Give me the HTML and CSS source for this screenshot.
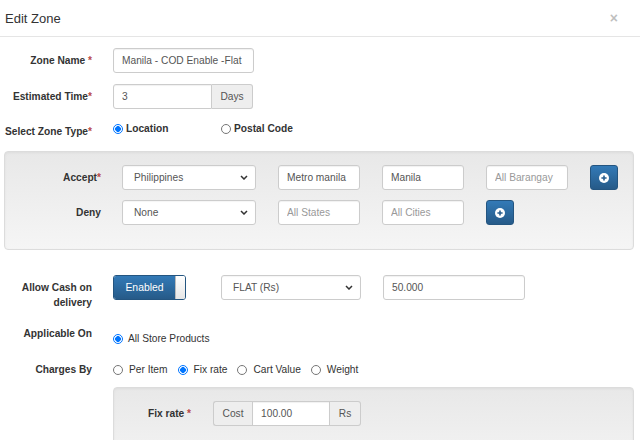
FILE: index.html
```html
<!DOCTYPE html>
<html>
<head>
<meta charset="utf-8">
<link rel="stylesheet" href="styles.css">
</head>
<body>
<div class="modal">
  <div class="head">
    <h4 class="title">Edit Zone</h4>
    <span class="close">×</span>
  </div>
  <div class="body">
    <div class="row r1">
      <label class="lbl">Zone Name <span class="req">*</span></label>
      <input class="ctl w-name" type="text" value="Manila - COD Enable -Flat">
    </div>
    <div class="row r2">
      <label class="lbl">Estimated Time<span class="req">*</span></label>
      <div class="group w-est">
        <input class="ctl grow" type="text" value="3">
        <span class="addon addon-r">Days</span>
      </div>
    </div>
    <div class="row r3">
      <label class="lbl lbl-top">Select Zone Type<span class="req">*</span></label>
      <div class="radios bold">
        <label class="opt opt-wide"><input type="radio" name="zt" checked><span>Location</span></label>
        <label class="opt"><input type="radio" name="zt"><span>Postal Code</span></label>
      </div>
    </div>

    <div class="well well1">
      <div class="wrow">
        <label class="lbl">Accept<span class="req">*</span></label>
        <div class="sel w-sel"><span>Philippines</span><svg width="8" height="5" viewBox="0 0 8 5"><polyline points="1,1 4,4 7,1" fill="none" stroke="#333" stroke-width="1.5"/></svg></div>
        <input class="ctl w-in" type="text" value="Metro manila">
        <input class="ctl w-in" type="text" value="Manila">
        <input class="ctl w-in" type="text" placeholder="All Barangay">
        <button class="btn-plus"><svg width="10" height="10" viewBox="0 0 10 10"><circle cx="5" cy="5" r="5" fill="#fff"/><path d="M5 2.4v5.2M2.4 5h5.2" stroke="#285e8e" stroke-width="1.6"/></svg></button>
      </div>
      <div class="wrow">
        <label class="lbl">Deny</label>
        <div class="sel w-sel"><span>None</span><svg width="8" height="5" viewBox="0 0 8 5"><polyline points="1,1 4,4 7,1" fill="none" stroke="#333" stroke-width="1.5"/></svg></div>
        <input class="ctl w-in" type="text" placeholder="All States">
        <input class="ctl w-in" type="text" placeholder="All Cities">
        <button class="btn-plus"><svg width="10" height="10" viewBox="0 0 10 10"><circle cx="5" cy="5" r="5" fill="#fff"/><path d="M5 2.4v5.2M2.4 5h5.2" stroke="#285e8e" stroke-width="1.6"/></svg></button>
      </div>
    </div>

    <div class="row r4">
      <label class="lbl lbl-pad">Allow Cash on<br>delivery</label>
      <div class="toggle"><span class="tog-on">Enabled</span><span class="tog-handle"></span></div>
      <div class="sel w-sel2"><span>FLAT (Rs)</span><svg width="8" height="5" viewBox="0 0 8 5"><polyline points="1,1 4,4 7,1" fill="none" stroke="#333" stroke-width="1.5"/></svg></div>
      <input class="ctl w-amt" type="text" value="50.000">
    </div>

    <div class="row r5">
      <label class="lbl">Applicable On</label>
      <div class="radios r5-opts">
        <label class="opt"><input type="radio" name="ap" checked><span>All Store Products</span></label>
      </div>
    </div>

    <div class="row r6">
      <label class="lbl">Charges By</label>
      <div class="radios">
        <label class="opt"><input type="radio" name="cb"><span>Per Item</span></label>
        <label class="opt"><input type="radio" name="cb" checked><span>Fix rate</span></label>
        <label class="opt"><input type="radio" name="cb"><span>Cart Value</span></label>
        <label class="opt"><input type="radio" name="cb"><span>Weight</span></label>
      </div>
    </div>

    <div class="well well2">
      <div class="wrow">
        <label class="lbl2">Fix rate <span class="req">*</span></label>
        <div class="group">
          <span class="addon addon-l">Cost</span>
          <input class="ctl w-cost" type="text" value="100.00">
          <span class="addon addon-r addon-rs">Rs</span>
        </div>
      </div>
    </div>
  </div>
</div>
</body>
</html>
```

FILE: styles.css
```css
* { box-sizing: border-box; }
html, body {
  margin: 0;
  padding: 0;
  background: #fff;
}
body {
  font-family: "Liberation Sans", Arial, sans-serif;
  font-size: 10.2px;
  color: #333;
  overflow: hidden;
}
.modal {
  width: 640px;
  height: 440px;
  overflow: hidden;
}
.head {
  height: 37px;
  border-bottom: 1px solid #e5e5e5;
  display: flex;
  align-items: center;
  justify-content: space-between;
  padding: 0 22px 0 5px;
}
.title {
  margin: 0;
  font-size: 13px;
  font-weight: normal;
  color: #333;
}
.close {
  font-size: 14px;
  font-weight: bold;
  color: #000;
  opacity: 0.25;
  line-height: 1;
}
.body { padding: 0; }
.row {
  display: flex;
  align-items: center;
}
.lbl {
  width: 92px;
  margin-right: 21px;
  text-align: right;
  font-weight: bold;
  line-height: 15px;
  flex: none;
}
.req { color: #b94a48; }
.lbl-top { align-self: flex-start; padding-top: 1px; }
.lbl-pad { align-self: flex-start; padding-top: 5px; }

.ctl {
  height: 25px;
  border: 1px solid #ccc;
  border-radius: 3px;
  padding: 0 8px;
  font-family: inherit;
  font-size: 10.2px;
  color: #555;
  background: #fff;
  box-shadow: inset 0 1px 1px rgba(0,0,0,.06);
  outline: none;
  flex: none;
}
.ctl::placeholder { color: #999; }

.r1 { margin-top: 11px; }
.w-name { width: 141px; }
.r2 { margin-top: 11px; }
.group { display: flex; flex: none; height: 25px; }
.w-est { width: 140px; }
.grow { flex: 1; min-width: 0; border-radius: 3px 0 0 3px; }
.addon {
  display: flex;
  align-items: center;
  justify-content: center;
  background: #eee;
  border: 1px solid #ccc;
  color: #555;
  height: 25px;
  flex: none;
}
.addon-r { border-left: 0; border-radius: 0 3px 3px 0; width: 41px; }
.addon-l { border-right: 0; border-radius: 3px 0 0 3px; width: 39px; }

.r3 { margin-top: 14px; align-items: flex-start; }
.radios { display: flex; align-items: center; line-height: 12px; }
.bold { font-weight: bold; }
.opt {
  display: flex;
  align-items: center;
  margin-right: 10px;
}
.opt-wide { width: 108px; margin-right: 0; }
.opt input {
  appearance: none;
  -webkit-appearance: none;
  width: 10px;
  height: 10px;
  margin: 0 5px 0 0;
  border: 1px solid #767676;
  border-radius: 50%;
  background: #fff;
  flex: none;
}
.opt input:checked {
  border-color: #0075ff;
  background: radial-gradient(circle, #0075ff 0 2.6px, #fff 3.1px);
}
.bold .opt input { margin-right: 3px; }

.well {
  border: 1px solid #dcdcdc;
  border-radius: 4px;
  background: linear-gradient(to bottom, #e8e8e8 0, #f5f5f5 100%);
  box-shadow: inset 0 1px 3px rgba(0,0,0,.05);
}
.well1 {
  margin: 12px 6px 0 4px;
  padding: 13px 0 24px 4px;
}
.wrow { display: flex; align-items: center; }
.well1 .wrow + .wrow { margin-top: 10px; }
.sel {
  height: 25px;
  border: 1px solid #ccc;
  border-radius: 3px;
  background: #fff;
  color: #555;
  display: flex;
  align-items: center;
  justify-content: space-between;
  padding: 0 7px 0 11px;
  flex: none;
  box-shadow: inset 0 1px 1px rgba(0,0,0,.04);
}
.w-sel { width: 134px; margin-right: 22px; }
.w-in { width: 82px; margin-right: 22px; }
.btn-plus {
  width: 28px;
  height: 25px;
  border: 1px solid #245580;
  border-radius: 3px;
  background: linear-gradient(to bottom, #337ab7 0, #265a88 100%);
  display: flex;
  align-items: center;
  justify-content: center;
  padding: 0;
  flex: none;
}

.r4 { margin-top: 25px; align-items: flex-start; }
.toggle {
  width: 73px;
  height: 25px;
  display: flex;
  border: 1px solid #245580;
  border-radius: 3px;
  overflow: hidden;
  margin-right: 35px;
  flex: none;
}
.tog-on {
  flex: 1;
  display: flex;
  align-items: center;
  justify-content: center;
  color: #fff;
  font-size: 10.4px;
  background: linear-gradient(to bottom, #337ab7 0, #265a88 100%);
}
.tog-handle {
  width: 10px;
  background: linear-gradient(to bottom, #fff 0, #e6e6e6 100%);
  border-left: 1px solid #bbb;
}
.w-sel2 { width: 140px; margin-right: 22px; }
.w-amt { width: 142px; }

.r5 { margin-top: 16px; align-items: flex-start; }
.r5-opts { padding-top: 5px; line-height: 15px; }
.r6 { margin-top: 16px; }
.r6 .opt input { margin-right: 6px; }

.well2 {
  margin: 10px 6px 0 113px;
  height: 90px;
  padding: 13px 0 0 34px;
}
.lbl2 {
  font-weight: bold;
  margin-right: 22px;
}
.w-cost { width: 78px; border-radius: 0; }
.addon-rs { width: 31px; }
```
